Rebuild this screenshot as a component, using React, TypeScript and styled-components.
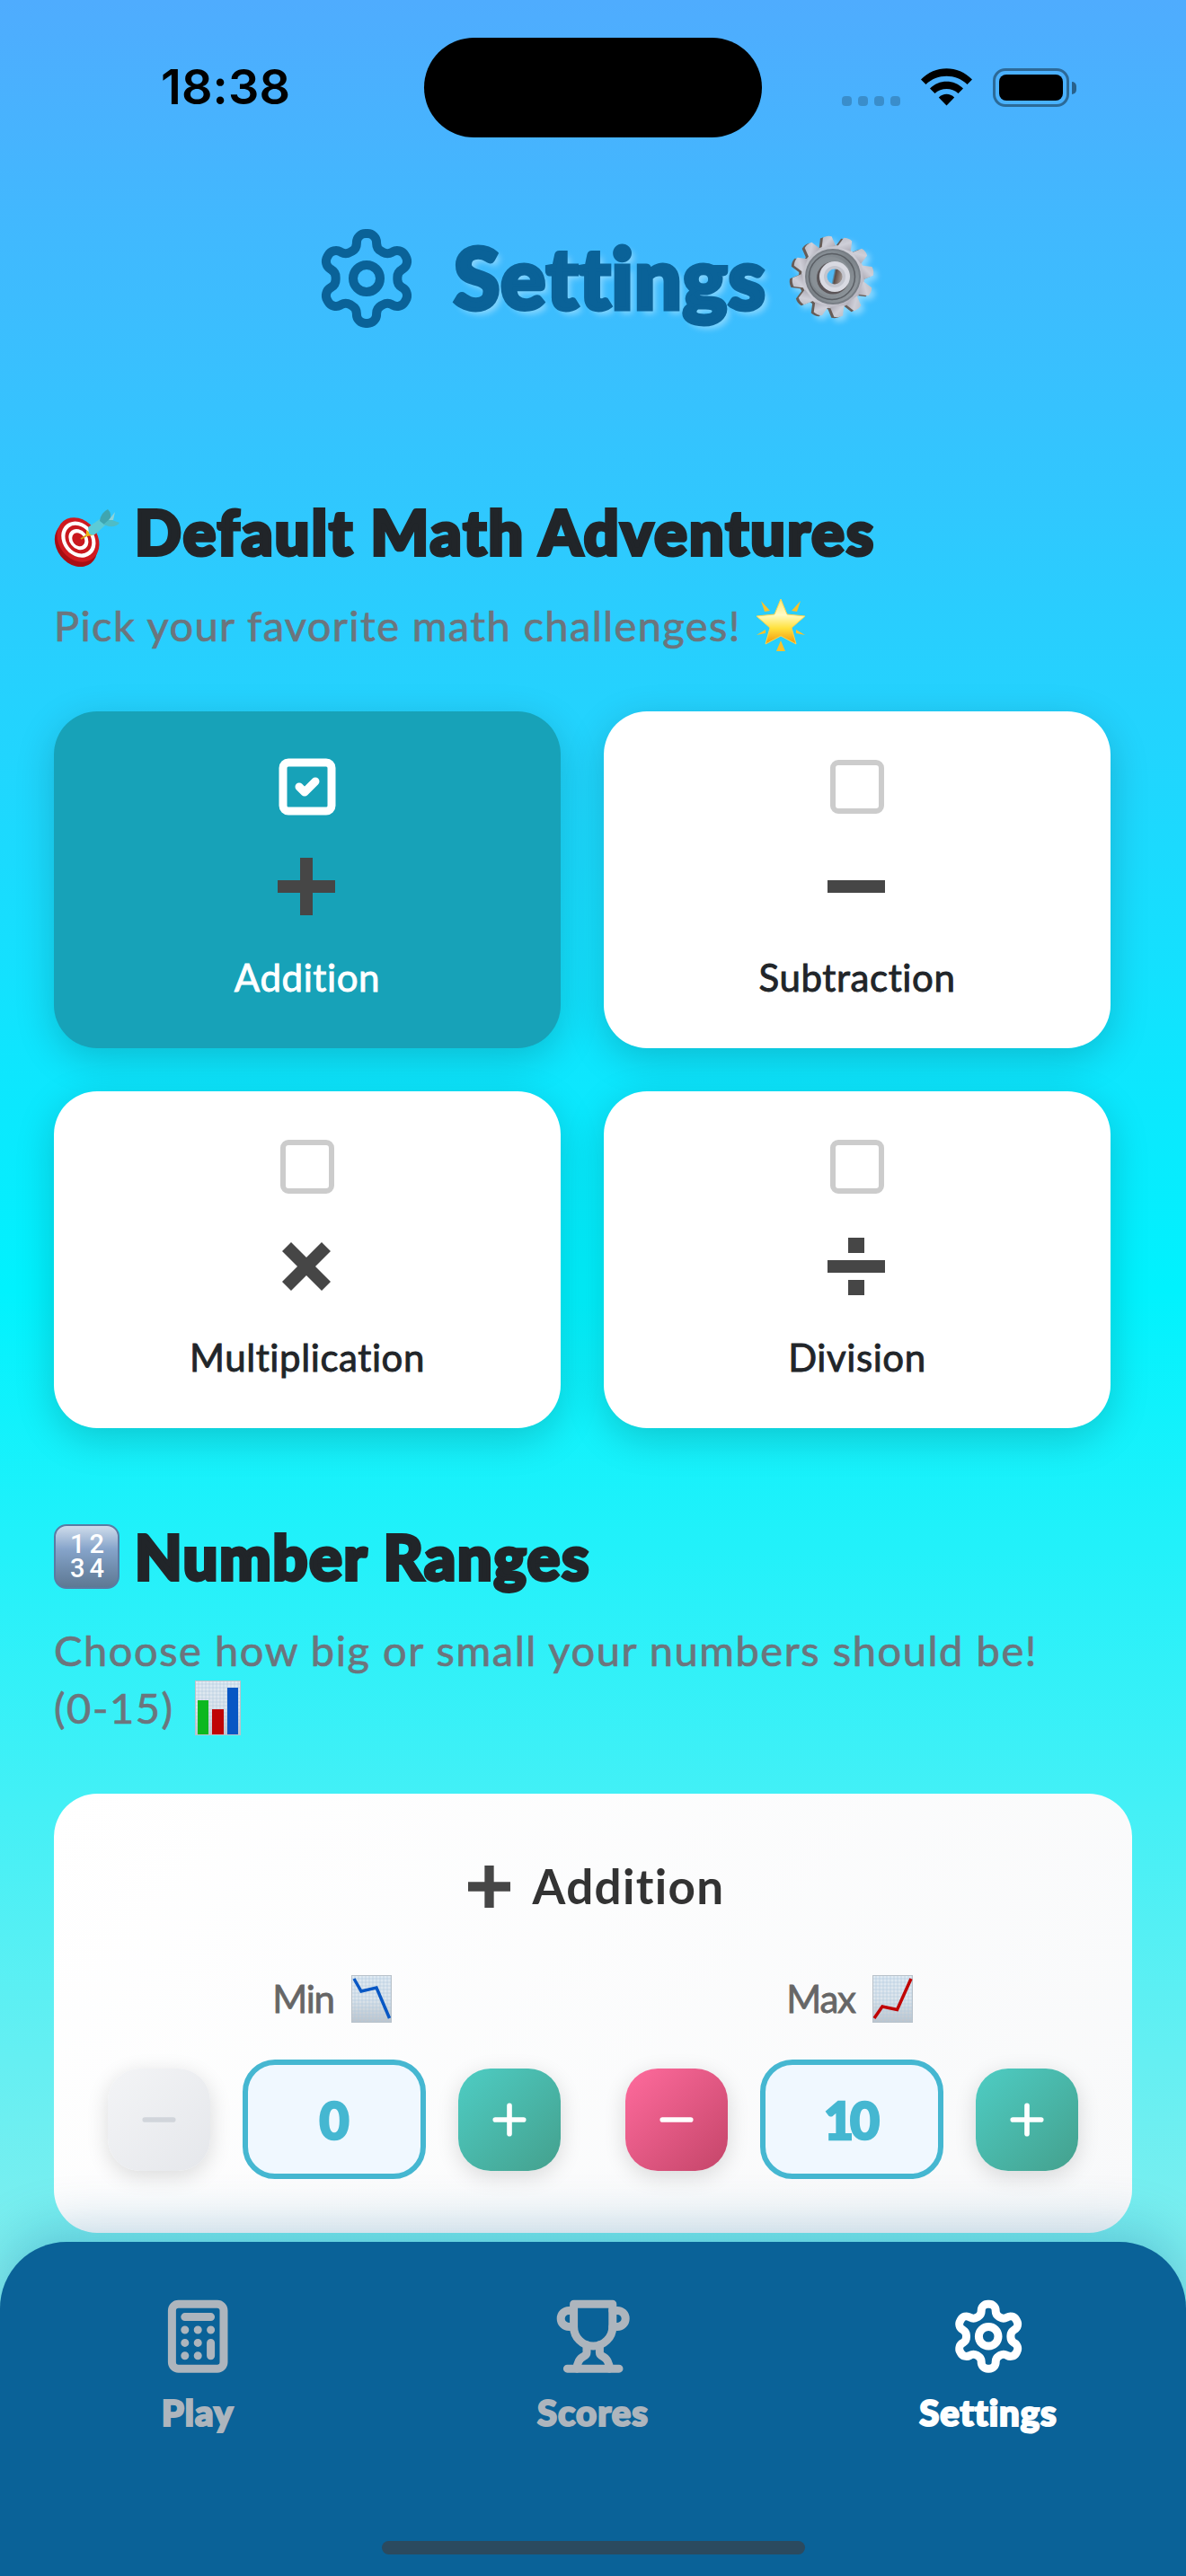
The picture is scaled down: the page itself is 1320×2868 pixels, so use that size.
import React from 'react';
import styled, { createGlobalStyle } from 'styled-components';

const rounded = `'Lato', 'Open Sans', sans-serif`;

const GlobalStyle = createGlobalStyle`
  * { box-sizing: border-box; }
  body { margin: 0; }
  svg { display: block; flex: none; overflow: visible; }
  h1, h2, h3, p { margin: 0; font-weight: 400; }
  button { font: inherit; border: 0; padding: 0; background: none; }
`;

const Screen = styled.div`
  position: relative;
  display: flex;
  flex-direction: column;
  width: 1320px;
  height: 2868px;
  overflow: hidden;
  font-family: ${rounded};
  background: linear-gradient(180deg, #4facfe 0%, #00f2fe 50%, #a8edea 100%);
`;

/* Status bar */
const StatusBar = styled.div`
  display: grid;
  grid-template-columns: 472px 376px 472px;
  align-items: center;
  height: 194px;
`;
const Clock = styled.div`
  padding-left: 179px;
  font: 600 54px/60px 'Inter', sans-serif;
  letter-spacing: 0.1px;
  color: #000;
`;
const Island = styled.div`
  height: 111px;
  border-radius: 56px;
  background: #000;
`;
const Indicators = styled.div`
  display: flex;
  align-items: flex-end;
  height: 43px;
  padding-left: 89px;
`;
const Signal = styled.div`
  display: flex;
  gap: 7px;
  margin: 0 23px 1px 0;
`;
const Dot = styled.i`
  width: 11px;
  height: 11px;
  border-radius: 4px;
  background: rgba(0, 0, 0, 0.2);
`;
const Battery = styled.div`
  width: 85px;
  height: 43px;
  margin-left: 23px;
  padding: 4px;
  border: 3px solid rgba(0, 0, 0, 0.4);
  border-radius: 14px;
`;
const Charge = styled.div`
  height: 100%;
  border-radius: 8px;
  background: #000;
`;
const BatteryCap = styled.div`
  width: 5px;
  height: 14px;
  margin: 0 0 14px 3px;
  border-radius: 0 5px 5px 0;
  background: rgba(0, 0, 0, 0.45);
`;

/* Header */
const Header = styled.header`
  display: flex;
  align-items: center;
  height: 232px;
  padding-left: 348px;
  color: #0a6298;
`;
const Title = styled.h1`
  display: flex;
  align-items: center;
  margin: 0 0 4px 37px;
  font-size: 93px;
  line-height: 112px;
  font-weight: 900;
  letter-spacing: 1.2px;
  -webkit-text-stroke: 5px #0a6298;
  text-shadow: 5px 5px 7px rgba(255, 255, 255, 0.4);
  svg {
    margin-left: 26px;
    filter: drop-shadow(4px 4px 3px rgba(255, 255, 255, 0.4));
  }
`;

/* Content */
const Content = styled.main`
  display: flex;
  flex-direction: column;
  gap: 107px;
  flex: 1;
  padding: 130px 60px 0;
`;
const SectionTitle = styled.h2<{ $spacing: number }>`
  display: flex;
  align-items: center;
  gap: 17px;
  height: 72px;
  margin-bottom: 36px;
  font-size: 68px;
  line-height: 72px;
  font-weight: 900;
  letter-spacing: ${(p) => p.$spacing}px;
  color: #212529;
  -webkit-text-stroke: 4px #212529;
  white-space: nowrap;
`;
const Hint = styled.p<{ $spacing: number }>`
  margin-bottom: 64px;
  font-size: 47px;
  line-height: 64px;
  letter-spacing: ${(p) => p.$spacing}px;
  color: #6c757d;
  -webkit-text-stroke: 0.7px #6c757d;
`;
const HintLine = styled.span<{ $gap?: number }>`
  display: flex;
  align-items: center;
  height: 64px;
  gap: ${(p) => p.$gap ?? 0}px;
  white-space: nowrap;
`;
const Keypad = styled.span`
  width: 73px;
  height: 72px;
  flex: none;
  padding: 7px 12px 0 16px;
  border-radius: 14px;
  border: 2px solid #5a7ba3;
  background: linear-gradient(180deg, #cfdceb 0%, #86a4ca 38%, #7390b1 65%, #5e7893 100%);
  font: 500 29px/27px 'Roboto', sans-serif;
  letter-spacing: 5px;
  white-space: normal;
  color: #fff;
  -webkit-text-stroke: 0;
`;

/* Operation cards */
const CardGrid = styled.div`
  display: grid;
  grid-template-columns: 564px 564px;
  gap: 48px;
`;
const OperationCard = styled.button<{ $active?: boolean }>`
  display: flex;
  flex-direction: column;
  align-items: center;
  height: 375px;
  padding-top: 48px;
  border-radius: 48px;
  background: ${(p) => (p.$active ? '#17a2b8' : '#fff')};
  color: ${(p) => (p.$active ? '#fff' : '#212529')};
  box-shadow: 0 12px 44px rgba(0, 0, 0, 0.18);
`;
const OperationLabel = styled.span`
  margin-top: 37px;
  font-size: 42px;
  line-height: 56px;
  letter-spacing: 0.6px;
  -webkit-text-stroke: 0.9px currentColor;
`;
const OperationSign = styled.svg`
  margin: 39px 3px 0 0;
`;

/* Range panel */
const RangePanel = styled.section`
  height: 489px;
  padding: 67px 60px 0;
  border-radius: 48px;
  background: linear-gradient(135deg, #ffffff 0%, #f8f9fa 100%);
`;
const RangeTitle = styled.h3`
  display: flex;
  justify-content: center;
  align-items: center;
  gap: 25px;
  height: 72px;
  padding-left: 7px;
  font-size: 53px;
  line-height: 72px;
  font-weight: 700;
  letter-spacing: 1.3px;
  color: #333;
`;
const RangeColumns = styled.div`
  display: grid;
  grid-template-columns: 504px 504px;
  gap: 72px;
  margin-top: 61px;
`;
const RangeLabel = styled.div`
  display: flex;
  justify-content: center;
  align-items: center;
  gap: 19px;
  height: 56px;
  margin-bottom: 40px;
  padding-right: 5px;
  font-size: 42px;
  line-height: 56px;
  letter-spacing: -1.2px;
  color: #666;
  -webkit-text-stroke: 0.8px #666;
`;
const Stepper = styled.div`
  display: grid;
  grid-template-columns: 114px 204px 114px;
  gap: 36px;
  align-items: center;
`;
const stepColors = {
  off: 'linear-gradient(135deg, #f3f4f6, #e5e7eb)',
  minus: 'linear-gradient(135deg, #ff6b9d, #c44569)',
  plus: 'linear-gradient(135deg, #4ecdc4, #44a08d)',
};
const StepButton = styled.button<{ $kind: keyof typeof stepColors }>`
  display: flex;
  align-items: center;
  justify-content: center;
  height: 114px;
  border-radius: 36px;
  background: ${(p) => stepColors[p.$kind]};
  color: ${(p) => (p.$kind === 'off' ? '#d1d5db' : '#fff')};
  box-shadow: 0 6px 24px rgba(0, 0, 0, 0.14);
`;
const Value = styled.div`
  height: 133px;
  padding-right: 4px;
  border: 6px solid #45b7d1;
  border-radius: 36px;
  background: #f0f8ff;
  font-size: 57px;
  line-height: 123px;
  font-weight: 900;
  letter-spacing: -4px;
  text-align: center;
  color: #45b7d1;
  -webkit-text-stroke: 2.6px #45b7d1;
`;

/* Tab bar */
const TabBar = styled.nav`
  position: relative;
  z-index: 1;
  display: grid;
  grid-template-columns: repeat(3, 1fr);
  height: 372px;
  padding-top: 62px;
  border-radius: 74px 74px 0 0;
  background: #0a6298;
  box-shadow: 0 -12px 60px rgba(10, 98, 152, 0.3);
`;
const Tab = styled.div<{ $active?: boolean }>`
  display: flex;
  flex-direction: column;
  align-items: center;
  gap: 14px;
  color: ${(p) => (p.$active ? '#fff' : '#adb5bd')};
  font-size: 40px;
  line-height: 56px;
  font-weight: 900;
  letter-spacing: 1px;
  -webkit-text-stroke: 2.2px currentColor;
`;
const HomeIndicator = styled.div`
  position: absolute;
  left: 425px;
  bottom: 24px;
  width: 471px;
  height: 15px;
  border-radius: 8px;
  background: #2b4a5f;
`;

type IconProps = { size: number; stroke: number; color?: string; children: React.ReactNode };
const LineIcon = ({ size, stroke, color = 'currentColor', children }: IconProps) => (
  <svg width={size} height={size} viewBox="0 0 24 24" fill="none" stroke={color} strokeWidth={stroke} strokeLinecap="round" strokeLinejoin="round">
    {children}
  </svg>
);
const CogPaths = () => (
  <>
    <path d="M12.22 2h-.44a2 2 0 0 0-2 2v.18a2 2 0 0 1-1 1.73l-.43.25a2 2 0 0 1-2 0l-.15-.08a2 2 0 0 0-2.73.73l-.22.38a2 2 0 0 0 .73 2.73l.15.1a2 2 0 0 1 1 1.72v.51a2 2 0 0 1-1 1.74l-.15.09a2 2 0 0 0-.73 2.73l.22.38a2 2 0 0 0 2.73.73l.15-.08a2 2 0 0 1 2 0l.43.25a2 2 0 0 1 1 1.73V20a2 2 0 0 0 2 2h.44a2 2 0 0 0 2-2v-.18a2 2 0 0 1 1-1.73l.43-.25a2 2 0 0 1 2 0l.15.08a2 2 0 0 0 2.73-.73l.22-.39a2 2 0 0 0-.73-2.73l-.15-.08a2 2 0 0 1-1-1.74v-.5a2 2 0 0 1 1-1.74l.15-.09a2 2 0 0 0 .73-2.73l-.22-.38a2 2 0 0 0-2.73-.73l-.15.08a2 2 0 0 1-2 0l-.43-.25a2 2 0 0 1-1-1.73V4a2 2 0 0 0-2-2z" />
    <circle cx="12" cy="12" r="3" />
  </>
);
const CalculatorPaths = () => (
  <>
    <rect x="4" y="2" width="16" height="20" rx="2" />
    <path d="M8 6h8M16 14v4M16 10h.01M12 10h.01M8 10h.01M12 14h.01M8 14h.01M12 18h.01M8 18h.01" />
  </>
);
const TrophyPaths = () => (
  <>
    <path d="M6 9H4.5a2.5 2.5 0 0 1 0-5H6M18 9h1.5a2.5 2.5 0 0 0 0-5H18M4 22h16" />
    <path d="M10 14.66V17c0 .55-.47.98-.97 1.21C7.85 18.75 7 20.24 7 22M14 14.66V17c0 .55.47.98.97 1.21C16.15 18.75 17 20.24 17 22" />
    <path d="M18 2H6v7a6 6 0 0 0 12 0V2Z" />
  </>
);
const Checkbox = ({ checked }: { checked?: boolean }) => (
  <LineIcon size={72} stroke={checked ? 3 : 2} color={checked ? '#fff' : '#ccc'}>
    <rect x="3" y="3" width="18" height="18" rx="2" />
    {checked && <path d="m9 12 2 2 4-4" />}
  </LineIcon>
);

const Wifi = styled.svg`
  margin-bottom: 1px;
`;
const WifiIcon = () => (
  <Wifi width="57" height="42" viewBox="0 0 57 42">
    <path d="M0 12.5C15.500-4 41.500-4 57 12.500L51.500 18C38.800 5.800 18.200 5.800 5.500 18Z" />
    <path d="M10 22.500C20 12 37 12 47 22.500L41.500 28C34.500 21.200 22.500 21.200 15.500 28Z" />
    <path d="M19.800 32.500C24.800 27.500 32.200 27.500 37.200 32.500L28.500 41.500Z" />
  </Wifi>
);

const teeth = Array.from({ length: 12 }, (_, i) => i * 30 - 8);
const Teeth = ({ fill }: { fill: string }) => (
  <g fill={fill}>
    <circle r="36" />
    {teeth.map((a) => (
      <path key={a} d="M-8 -34L-5 -45.500Q0 -47.500 5 -45.500L8 -34Z" transform={`rotate(${a})`} />
    ))}
  </g>
);
const GearEmoji = () => (
  <svg width="94" height="94" viewBox="-47 -47 94 94">
    <defs>
      <linearGradient id="gearFace" x1="0" y1="0" x2="1" y2="1">
        <stop offset="0" stopColor="#b9bcc4" />
        <stop offset="0.5" stopColor="#cfcfd8" />
        <stop offset="1" stopColor="#adabb5" />
      </linearGradient>
      <linearGradient id="gearWell" x1="0" y1="0" x2="1" y2="1">
        <stop offset="0" stopColor="#8c949b" />
        <stop offset="0.5" stopColor="#7c8389" />
        <stop offset="1" stopColor="#989ea4" />
      </linearGradient>
      <linearGradient id="gearHole" x1="0" y1="0" x2="1" y2="0.2">
        <stop offset="0.45" stopColor="#4fbaf5" />
        <stop offset="0.6" stopColor="#5e4c45" />
        <stop offset="1" stopColor="#9a8f8b" />
      </linearGradient>
    </defs>
    <g transform="translate(-2 1) scale(.98)"><Teeth fill="#665c57" /></g>
    <g transform="translate(1 0) scale(.98)"><Teeth fill="url(#gearFace)" /></g>
    <circle cx="1" r="31" fill="#777d84" />
    <circle cx="1" r="29" fill="url(#gearWell)" />
    <circle cx="0" r="25.500" fill="none" stroke="#5a5e64" strokeWidth="1.500" />
    <circle cx="-1" r="22" fill="#899096" />
    <circle cx="1" cy="1.500" r="18" fill="#5b5558" />
    <circle cx="3" cy="0" r="17" fill="#d9dae2" />
    <circle cx="3" cy="0" r="12" fill="#c3c5ce" />
    <circle cx="3" cy="0" r="8.500" fill="url(#gearHole)" />
  </svg>
);

const Target = styled.svg`
  margin-top: 12px;
`;
const TargetEmoji = () => (
  <Target width="73" height="62" viewBox="0 0 73 62">
    <g transform="rotate(-38 26 36)">
      <ellipse cx="23" cy="37.500" rx="21.500" ry="27" fill="#a80d14" />
      <ellipse cx="28" cy="35" rx="21.500" ry="26.500" fill="#cf1a20" />
      <ellipse cx="28.500" cy="35" rx="17.500" ry="21.500" fill="#fff" />
      <ellipse cx="28.500" cy="35" rx="13.500" ry="17" fill="#c9181e" />
      <ellipse cx="28.500" cy="35" rx="10" ry="12.500" fill="#fff" />
      <ellipse cx="28.500" cy="35" rx="6.500" ry="8" fill="#c9181e" />
    </g>
    <path d="M30 33L40 27" stroke="#d99b12" strokeWidth="2" />
    <path d="M36 23L44 29L36 30Z" fill="#f0b414" />
    <path d="M38 20L51 11L58 17L48 26Q43 31 39 27Z" fill="#5ccbd6" />
    <path d="M51 13Q52 4 60 0Q65 5 62 12L56 17Z" fill="#3fa5b0" />
    <path d="M55 17L62 11L73 15Q70 20 61 19Z" fill="#4fbcc6" />
    <path d="M61 12L68 3L66 12Z" fill="#8fd3da" />
  </Target>
);

const StarEmoji = () => (
  <svg width="56" height="60" viewBox="0 0 56 60">
    <defs>
      <linearGradient id="starFill" x1="0" y1="0" x2="0" y2="1">
        <stop offset="0" stopColor="#ffe873" />
        <stop offset="0.35" stopColor="#fffbc4" />
        <stop offset="0.65" stopColor="#ffe13d" />
        <stop offset="1" stopColor="#f2960c" />
      </linearGradient>
    </defs>
    <g fill="url(#starFill)" strokeLinejoin="round">
      <path d="M28 1L35 18L55 20L40 33L45 51L28 42L11 51L16 33L1 20L21 18Z" stroke="#ffd54a" strokeWidth="1" />
      <path d="M6 3L16 14L10 15ZM50 3L40 14L46 15ZM28 47L33 59H23Z" fill="#f8c22c" />
      <path d="M1 41L11 35L11 39ZM55 41L45 35L45 39Z" fill="#f8c22c" />
    </g>
  </svg>
);

const Sheet = ({ w, h }: { w: number; h: number }) => {
  const lines: React.ReactNode[] = [];
  for (let x = 4; x < w; x += 4) lines.push(<path key={`x${x}`} d={`M${x} 0V${h}`} />);
  for (let y = 4; y < h; y += 4) lines.push(<path key={`y${y}`} d={`M0 ${y}H${w}`} />);
  return (
    <>
      <defs>
        <linearGradient id="sheet" x1="0" y1="0" x2="0" y2="1">
          <stop offset="0" stopColor="#dfeaf3" />
          <stop offset="0.5" stopColor="#dde5ec" />
          <stop offset="1" stopColor="#bcc3ca" />
        </linearGradient>
      </defs>
      <rect width={w} height={h} fill="url(#sheet)" />
      <g stroke="#b3cbdd" strokeWidth="0.6">{lines}</g>
      <rect x=".5" y=".5" width={w - 1} height={h - 1} fill="none" stroke="#b9c2ca" />
    </>
  );
};
const BarChartEmoji = () => (
  <svg width="51" height="61" viewBox="0 0 51 61">
    <Sheet w={51} h={61} />
    <path d="M3 22H15V60H3Z" fill="#0cb81f" />
    <path d="M19 32H32V60H19Z" fill="#c00404" />
    <path d="M36 8H48V60H36Z" fill="#0857c4" />
  </svg>
);
const TrendEmoji = ({ up }: { up?: boolean }) => (
  <svg width="45" height="53" viewBox="0 0 45 53">
    <Sheet w={45} h={53} />
    <path
      d={up ? 'M2 48L11 35L27.500 38.500L43 4' : 'M3 4L11 18L28 14L42.500 48'}
      fill="none"
      stroke={up ? '#c00404' : '#0857c4'}
      strokeWidth="3.5"
    />
  </svg>
);

const signs = {
  plus: <path d="M4 29H29V4H43V29H68V43H43V68H29V43H4Z" />,
  minus: <path d="M4 29H68V43H4Z" />,
  times: <path d="M19 9L36 26L53 9L63 19L46 36L63 53L53 63L36 46L19 63L9 53L26 36L9 19Z" />,
  divide: <path d="M4 29H68V43H4ZM27 4H45V21H27ZM27 51H45V68H27Z" />,
};

const operations: { label: string; sign: keyof typeof signs; active?: boolean }[] = [
  { label: 'Addition', sign: 'plus', active: true },
  { label: 'Subtraction', sign: 'minus' },
  { label: 'Multiplication', sign: 'times' },
  { label: 'Division', sign: 'divide' },
];

const RangeControl = ({ label, value, up, atLimit }: { label: string; value: number; up?: boolean; atLimit?: boolean }) => (
  <div>
    <RangeLabel>
      {label}
      <TrendEmoji up={up} />
    </RangeLabel>
    <Stepper>
      <StepButton $kind={atLimit ? 'off' : 'minus'}>
        <LineIcon size={54} stroke={2.5}><path d="M5 12h14" /></LineIcon>
      </StepButton>
      <Value>{value}</Value>
      <StepButton $kind="plus">
        <LineIcon size={54} stroke={2.5}><path d="M5 12h14M12 5v14" /></LineIcon>
      </StepButton>
    </Stepper>
  </div>
);

export default function App() {
  return (
    <Screen>
      <GlobalStyle />
      <StatusBar>
        <Clock>18:38</Clock>
        <Island />
        <Indicators>
          <Signal><Dot /><Dot /><Dot /><Dot /></Signal>
          <WifiIcon />
          <Battery><Charge /></Battery>
          <BatteryCap />
        </Indicators>
      </StatusBar>

      <Header>
        <LineIcon size={120} stroke={2}><CogPaths /></LineIcon>
        <Title>Settings<GearEmoji /></Title>
      </Header>

      <Content>
        <section>
          <SectionTitle $spacing={2.3}><TargetEmoji />Default Math Adventures</SectionTitle>
          <Hint $spacing={1.38}>
            <HintLine $gap={16}>Pick your favorite math challenges!<StarEmoji /></HintLine>
          </Hint>
          <CardGrid>
            {operations.map((op) => (
              <OperationCard key={op.label} $active={op.active}>
                <Checkbox checked={op.active} />
                <OperationSign width="72" height="72" viewBox="0 0 72 72" fill="#464646">{signs[op.sign]}</OperationSign>
                <OperationLabel>{op.label}</OperationLabel>
              </OperationCard>
            ))}
          </CardGrid>
        </section>

        <section>
          <SectionTitle $spacing={1.9}>
            <Keypad>12 34</Keypad>Number Ranges
          </SectionTitle>
          <Hint $spacing={1.56}>
            <HintLine>Choose how big or small your numbers should be!</HintLine>
            <HintLine $gap={23}>(0-15)<BarChartEmoji /></HintLine>
          </Hint>
          <RangePanel>
            <RangeTitle>
              <svg width="47" height="47" viewBox="4 4 64 64" fill="#464646">{signs.plus}</svg>
              Addition
            </RangeTitle>
            <RangeColumns>
              <RangeControl label="Min" value={0} atLimit />
              <RangeControl label="Max" value={10} up />
            </RangeColumns>
          </RangePanel>
        </section>
      </Content>

      <TabBar>
        <Tab><LineIcon size={86.4} stroke={2.5}><CalculatorPaths /></LineIcon>Play</Tab>
        <Tab><LineIcon size={86.4} stroke={2.5}><TrophyPaths /></LineIcon>Scores</Tab>
        <Tab $active><LineIcon size={86.4} stroke={2.5}><CogPaths /></LineIcon>Settings</Tab>
        <HomeIndicator />
      </TabBar>
    </Screen>
  );
}
